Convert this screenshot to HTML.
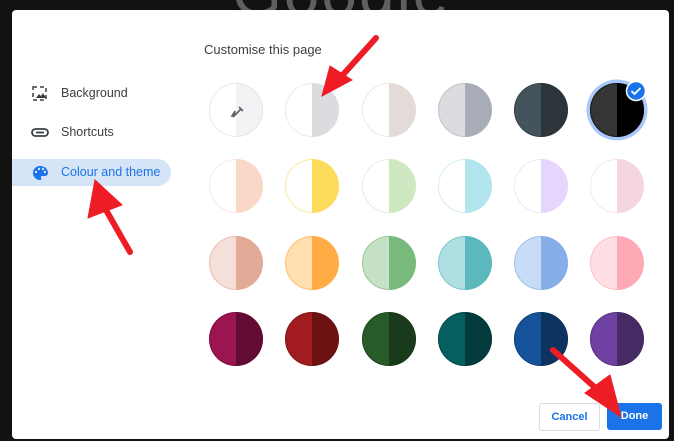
<!DOCTYPE html>
<html><head><meta charset="utf-8"><style>
html,body{margin:0;padding:0;width:674px;height:441px;overflow:hidden;background:#121212;font-family:"Liberation Sans",Arial,sans-serif}
.g{position:absolute;left:232px;top:-44px;font-size:64px;color:#5f5f5f;letter-spacing:2px}
.dlg{position:absolute;left:12px;top:10px;width:657px;height:429px;background:#fff;border-radius:4px}
.t{position:absolute;left:204px;top:42px;font-size:13px;color:#3c4043}
.item{position:absolute;left:61px;font-size:12.5px;color:#3c4043}
.sel{position:absolute;left:12px;top:159px;width:159px;height:27px;background:#d6e4f7;border-radius:0 14px 14px 0}
.btn{position:absolute;top:403px;height:26px;border-radius:3px;font-size:11px;font-weight:bold;text-align:center;line-height:26px}
</style></head><body>
<div class="g">Google</div>
<div class="dlg"></div>
<div class="sel"></div>
<div class="t">Customise this page</div>
<div class="item" style="top:86px">Background</div>
<div class="item" style="top:125px">Shortcuts</div>
<div class="item" style="top:165px;color:#1a73e8">Colour and theme</div>
<svg style="position:absolute;left:0;top:0" width="674" height="441">
<g fill="none" stroke="#3c4043" stroke-width="1.5">
<rect x="33" y="87" width="13" height="13" stroke-dasharray="4 3"/>
</g>
<path d="M36 98 l3-4 2 2 2-3 3 5z" fill="#3c4043"/>
<rect x="32" y="129" width="16" height="7" rx="3.5" fill="none" stroke="#3c4043" stroke-width="1.8"/>
<line x1="36" y1="132.5" x2="44" y2="132.5" stroke="#3c4043" stroke-width="1.8"/>
<path d="M40 166a7 7 0 1 0 0 14c1.5 0 1.5-1 1-2s0-2 1.5-2H45a3 3 0 0 0 3-3c0-4-3.5-7-8-7z" fill="#1a73e8"/>
<g fill="#d6e4f7"><circle cx="36" cy="172" r="1.2"/><circle cx="39" cy="169" r="1.2"/><circle cx="43" cy="169" r="1.2"/><circle cx="45" cy="172" r="1.2"/></g>
<defs><clipPath id="r"><rect x="0" y="0" width="1000" height="1000"/></clipPath></defs>
<g id="circles"></g>
</svg>
<svg id="c" style="position:absolute;left:0;top:0" width="674" height="441"></svg>
<div class="btn" style="left:539px;width:59px;border:1px solid #dadce0;color:#1a73e8;background:#fff">Cancel</div>
<div class="btn" style="left:607px;width:55px;background:#1a73e8;color:#fff;top:403px;height:27px">Done</div>
<svg style="position:absolute;left:0;top:0" width="674" height="441">
<g fill="#ee1c24" stroke="#ee1c24" stroke-linecap="round">
<line x1="376" y1="38" x2="340" y2="78" stroke-width="6"/>
<polygon points="322,96 330,66 352,80" />
<line x1="130" y1="252" x2="106" y2="210" stroke-width="6"/>
<polygon points="95,180 88,218 122,205"/>
<line x1="553" y1="350" x2="600" y2="392" stroke-width="6"/>
<polygon points="621,417 585,393 610,375"/>
</g>
</svg>
<script>
var cols=[236,312,389,465,541,617],rows=[110,186,263,339];
var d=[
[["#fff","#f1f3f4","#dadce0"],["#fff","#dadce0","#dadce0"],["#fff","#e3dbd7","#e3dbd7"],["#dadce0","#a8acb6","#b0b3bb"],["#44545d","#2d353b","#2d353b"],["#353535","#000","#000"]],
[["#fff","#fad8c8","#fad8c8"],["#fff","#fddc5c","#fddc5c"],["#fff","#cee9c2","#cee9c2"],["#fff","#b3e5ef","#b3e5ef"],["#fff","#e6d5fd","#e6d5fd"],["#fff","#f5d5e2","#f5d5e2"]],
[["#f4e0d9","#e3ab97","#e3ab97"],["#ffdeaf","#ffac45","#ffac45"],["#c5e1c6","#78ba7c","#78ba7c"],["#b0dfe3","#5bb9be","#5bb9be"],["#c8dbf7","#86aee8","#86aee8"],["#fedfe3","#fdaab6","#fdaab6"]],
[["#9c1550","#620b33","#620b33"],["#a21b1f","#6c1213","#6c1213"],["#275c2a","#193b1b","#193b1b"],["#045f5f","#033a3b","#033a3b"],["#14539a","#0d3461","#0d3461"],["#6f41a2","#452a64","#452a64"]]];
var s="";
for(var r=0;r<4;r++)for(var c=0;c<6;c++){var x=cols[c],y=rows[r],k=d[r][c],R=27;
if(r==0&&c==5)s+='<circle cx="'+x+'" cy="'+y+'" r="30.5" fill="#a8c7fa"/>';
s+='<path d="M'+x+' '+(y-R)+'A'+R+' '+R+' 0 0 0 '+x+' '+(y+R)+'Z" fill="'+k[0]+'"/>';
s+='<path d="M'+x+' '+(y-R)+'A'+R+' '+R+' 0 0 1 '+x+' '+(y+R)+'Z" fill="'+k[1]+'"/>';
s+='<circle cx="'+x+'" cy="'+y+'" r="26.5" fill="none" stroke="'+k[2]+'" stroke-opacity=".6"/>';}
s+='<path d="M233 117l8-8m-2-2l4 4m-8 0l-3 5 2 0z" stroke="#5f6368" stroke-width="1.6" fill="none"/>';
s+='<circle cx="636" cy="91" r="9.5" fill="#1a73e8" stroke="#fff" stroke-width="1.5"/><path d="M631.5 91l3 3 6-6" stroke="#fff" stroke-width="1.8" fill="none"/>';
document.getElementById("c").innerHTML=s;
</script>
</body></html>
